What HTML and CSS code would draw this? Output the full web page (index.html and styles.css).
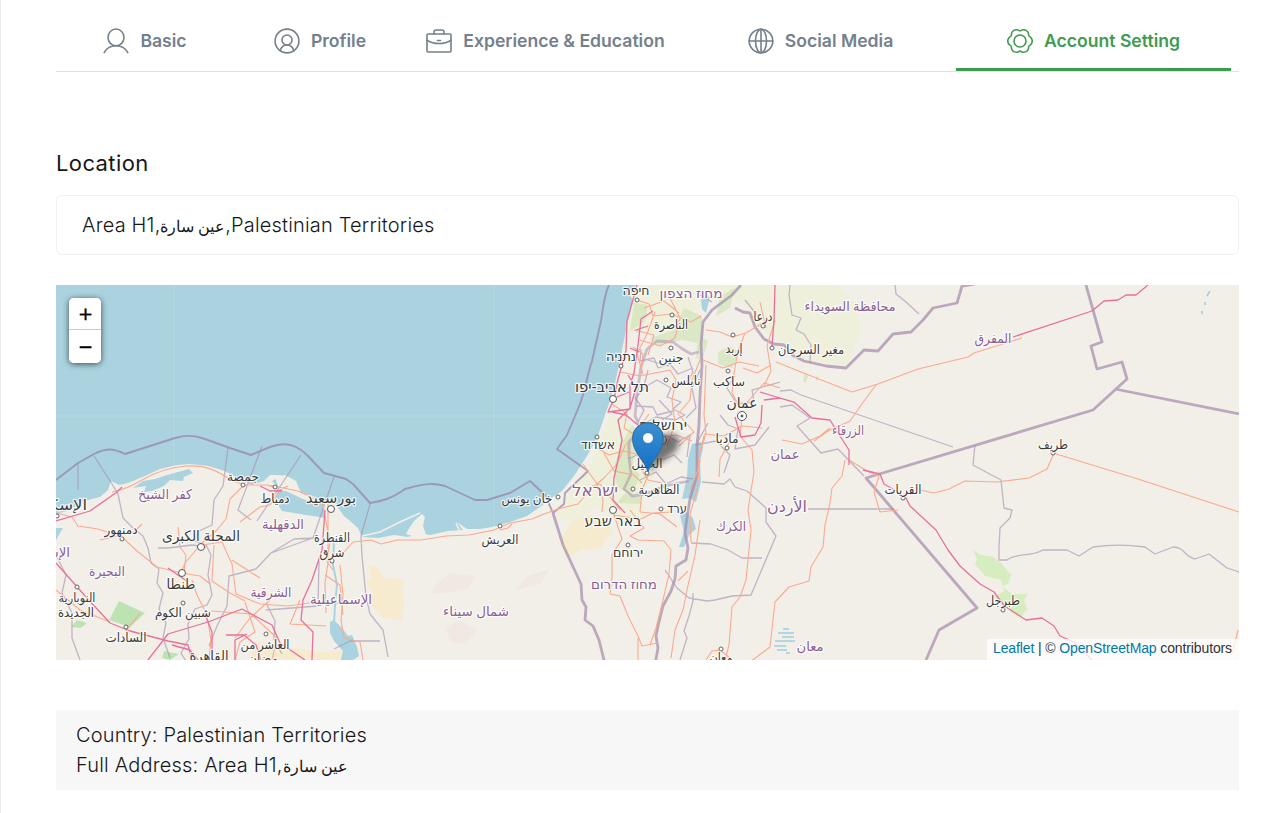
FILE: index.html
```html
<!DOCTYPE html>
<html lang="en">
<head>
<meta charset="utf-8">
<title>Account Setting</title>
<link rel="stylesheet" href="styles.css">
</head>
<body>
<main class="page">
  <nav class="tabs">
    <a class="tab">
      <svg class="tab-icon" viewBox="0 0 26 26"><ellipse cx="13" cy="9.400" rx="8" ry="8.400"/><path d="M1.200 24.600C3.500 20.400 8 17.800 13 17.800s9.500 2.600 11.800 6.800"/></svg>
      <span>Basic</span>
    </a>
    <a class="tab">
      <svg class="tab-icon" viewBox="0 0 26 26"><circle cx="13" cy="13" r="11.900"/><circle cx="13" cy="12" r="5"/><path d="M6.300 22.300c1-3.200 3.500-5.300 6.700-5.300s5.700 2.100 6.700 5.300"/></svg>
      <span>Profile</span>
    </a>
    <a class="tab">
      <svg class="tab-icon" viewBox="0 0 26 26"><rect x="1" y="6" width="24" height="18" rx="1"/><path d="M8 6V4q0-2 2-2h6q2 0 2 2v2M1 12.200c7 4.400 17 4.400 24 0M11.500 12.500h3"/></svg>
      <span>Experience &amp; Education</span>
    </a>
    <a class="tab">
      <svg class="tab-icon" viewBox="0 0 26 26"><circle cx="13" cy="13" r="11.800"/><ellipse cx="13" cy="13" rx="5.500" ry="11.800"/><path d="M1.200 13h23.600M13 1.200v23.600"/></svg>
      <span>Social Media</span>
    </a>
    <a class="tab tab-active">
      <svg class="tab-icon" viewBox="0 0 26 26"><circle cx="13" cy="13" r="6"/><path d="M14.800 2A5.200 5.200 0 0 1 21.630 5.940Q21.100 8.300 23.430 9.060A5.200 5.200 0 0 1 23.430 16.940Q21.100 17.700 21.630 20.060A5.200 5.200 0 0 1 14.800 24Q13 22.400 11.200 24A5.200 5.200 0 0 1 4.370 20.060Q4.900 17.700 2.570 16.940A5.200 5.200 0 0 1 2.570 9.060Q4.900 8.300 4.370 5.940A5.200 5.200 0 0 1 11.200 2Q13 3.600 14.800 2Z"/></svg>
      <span>Account Setting</span>
    </a>
  </nav>

  <h2 class="heading">Location</h2>
  <div class="field">Area H1,<span class="ar">عين سارة</span>,Palestinian Territories</div>

  <section class="map">
    <svg class="map-canvas" viewBox="56 285 1183 375">
      <rect class="land" x="56" y="285" width="1183" height="375"/>

      <!-- vegetation, farmland and sand -->
      <path class="farm" d="M640 285h198l18 20 6 25-14 35-45-3-22-20-26-16-8-20-25-12-30 18-18 22-42-2-8 20-6-30Z"/>
      <path class="farm" d="M610 415l20 5 3 32 22 20-12 25 3 20-20 6-30-15-20 14-22-4 18-30 20-26Z"/>
      <path class="green" d="M634 303l14 2-3 16-15 10ZM650 338l24-8 10-22 18 8 1 28-21-4-25 6ZM632 425l8 8-8 34 8 8-8 20-15-8-3-20 8-24ZM718 352l12-6 10 6-8 16-14-4ZM698 335l10 6-6 20-6-3ZM720 296l15-8-5 20-14 8ZM624 494l16 2 2 8-25-1ZM805 372l3 4-2 7-3-2ZM816 376l3 2-3 4Z"/>
      <path class="forest" d="M973 550l8 5 12 2 8 6 10 12-3 9-6 2 10 8h16l-4 6 3 9-6 8-8-3-14-14-8-3 13-5-3-12-16-4-10-12 2-5Z"/>
      <path class="wood" d="M119 601l26 12-15 14-21-7ZM77 620l10 3-6 5-10-1ZM164 651l15 3-9 6-8-2Z"/>
      <path class="sand" d="M561 538l10-16 20-8 17 10 5 10-8 6-3 8-21 2-15 8ZM368 564l10 4 6 10 20 2-2 12 2 8-2 21-18-3-10-10 -6-8 4-5-5-12 4-6ZM255 641l20 4 46 7 30-2-2 10H250Z"/>
      <path class="hill" d="M435 585l15-12 25 3-6 12-18 4-20 2ZM515 590l14-15 20-5-8 14ZM446 628l12-8 20 10-13 14-15-2Z"/>

      <!-- sea, lagoons, Dead Sea and Galilee -->
      <path class="water" d="M56 285H636L631 296 633 302 628 320 624 340 619 365 613 392 605 415 597 438 587 456 574 476 562 491 550 499 540 507 527 516 507 523 492 527 480 529 467 529 457 522 463 530 448 531 430 535 419 533 408 537 394 535 378 538 362 537 358 528 344 516 336 505 330 500 323 506 326 518 300 514 282 511 275 500 278 490 292 492 286 486 278 487 272 481 282 475 270 475 264 481 252 485 240 480 225 471 208 466 190 464 177 465 160 469 145 476 128 483 119 485 111 481 108 490 100 497 84 501 71 510 60 513 56 517Z"/>
      <path class="landfill" d="M275 477l10-2 11 6 5 12 12 3 8 6-16-2-17-8-10-6Z"/>
      <path class="spit" d="M362 536l18-4 20-10 20-9M456 523l4 9M348 520l8 8"/>
      <path class="landfill" d="M408 530l6-9 8-7 3 3-2 9 3 9-14 1-6-2Z"/>
      <path class="water" d="M133 488l10-7 12-2 12-4 22-6 4 4-9 4-1 4-13-1-6 6-12 5-8 1 2-6ZM56 528l7 0-3 5-4 7ZM330 622l4-2 8 8 6 8 4-1 5 12 2 9-6 4h-12l2-9-9-10-4-8ZM701 300l3-6 6 3-4 16-4-4Z"/>
      <path class="water" d="M692 444l9-2 2 6-3 14 1 20-5 20-7-4-7 1 5-22 1-18ZM680 515l6-3 7 6 3 11-7 6-5 12h-5l5-15Z"/>
      <path class="stripe" d="M783 629h6M778 633h16M782 637h12M775 641h20M774 646h12M777 650h10M786 653h4"/>
      <path class="canal" d="M334 540l-1 25 4 20-2 20-1 20"/>
      <path class="stripe" d="M1210 291l-3 5M1205 302l0 3M1202 311v3"/>

      <!-- tile seams -->
      <path class="seam" d="M174 285v375M494 285v375M814 285v375M1134 285v375M56 416h1183"/>

      <!-- administrative boundaries -->
      <path class="admin" d="M78 463v27M94 456l18 28 6 10 5 24 10 10 10 8 5 12 3 15 8 6-2 14 6 10-4 16 7 14-3 15 7 20M228 448l-5 38-9 14-2 25-13 6-5 10 12 4 5 10-3 20 4 20-5 10-12 4-7 15 1 15-8 14 6 10M158 548h10l24-3 14 2M262 446l-24 64 13 10M301 455l-24 36-20 30M334 477l-9 26-12 35-42 15-15 16-27 7-2 30-10 20-8 20M271 553l23-14 20-1M266 603l9 18-1 18 8 15M370 504l-9 32 1 20 4 40 4 18 13 16 5 27M266 610l52-4 1-45M380 641h-30l-16 8M56 555l10 20-4 18 10 20 0 25 8 22"/>
      <path class="admin" d="M790 285l-1 10 3 20 9 3-5 12 8 4 5 8 2 3-1 18M895 285l1 9 10 8 13 12M780 391l11-1 10 5 152 52M780 407l12-2 10 7 8 6-13 8 24 27 17-4 26 27M735 376l-8 12 10 16 17-2-2-12 28-8M720 415l8 10 10 4-3 20 20-4 14-18M708 423l-12 22 20-4 14 14-6 18M702 482l22 2 6-5 5 8 12 4 19 17v14l10 14-25 59-19 1-17 4-8 1-18-3-12-10-12-18M691 543l20 1 17 6 14 8 20 0M808 509h86M975 445l-2 20 28 15 3 28 8 2-2 8-10 10-1 20v12h8c8-7 24-3 36-10l24 0 12 6 14-9c20-3 38-2 52 0l10 7 18-7c12 0 11 10 22 12l14-5 18 14 12 4 8-1 9-13M693 593l0 8-4 15-5 15 3 7-7 22"/>
      <path class="admin" d="M641 349l-1 12 14-3 4 10 12-4 8 10 15-6M645 387l12-7 14 8-4 9 14 5-8 7 12 6-10 5-19-3-14 8M648 370l-5 20-8 8 9 12-6 12M659 400l13 14-10 6M628 459l20-9 14 10 12-5 8 8M640 480l16-8 10 12 15-7 12 2M648 360l20 6 8-8M637 406l16 1 4 8 16-4M688 357l5 15-6 10M660 432l18 10 12-7-3 22M700 295l12 7M745 300l12 15M700 370l-8 18 4 20-10 10"/>
      <path class="border thin" d="M56 480l22-17 16-9c12-6 19-6 31 0l50-16c10-3 20-3 30 1l25 9 21 7 19-8c16-6 27-2 38 9l16 17 22 6 7 5 17 19c12-2 21-4 35-14 20-6 30-6 40-3l30 14h12l23-7 20-12 15 14 8 18M609 285c-5 10-6 24-8 36l-9 40c-5 14-6 29-14 48l-11 26-10 14 31 22-23 22-1 11-11 9"/>
      <path class="border" d="M553 513l10 32 18 39 1 16 4 7-1 13 8 6 6 14 5 20"/>
      <path class="border" d="M741 285l-9 10-20 15-9 12-2 23 1 20-2 30-1 30-2 20 0 30-7 24-3 18-2 16 3 15-2 12-10 6-1 13-4 12-8 15-5 20-2 10 2 12-4 22"/>
      <path class="border" d="M735 308l8 4 7 1 5 14 9 12 10 5 10 1 8 10 12 6 22 5 20 2 18-18 14 1 15-17 18-2 12-12 10-12 24-5 5-17 12-2 10-2"/>
      <path class="border" d="M1086 285l16 57-11 4 6 23 25-7 5 17-11 10-23 21-227 68 111 130-38 22-13 30M1115 389l124 25"/>
      <path class="border green-line" d="M647 349l10-8 16 1 8 6 10 6 8-2M647 349l-6 18-4 27-2 22 6 12-12 14 0 14 2 18-7 15 8 7 13-2 20-8 24-5"/>

      <!-- primary roads -->
      <path class="road" d="M56 513l16 4 6 9 20 3 24 8 15 14 20 16 25 6 18 3 10 8M112 492c12-2 20-6 30-12s24-12 44-14c20-1 30 4 45 14l13 5 24 0 14 6M244 485l-14 14-4 20-10 12-14 12-17 20-4 10M178 527l2 20 6 8-2 18M202 545l20-3 10 22 4 30 24 10 28 2 28-4 38 2M192 580l5 15 10 20 4 25-2 20M214 545l-2 36 18 12 15 8M232 560l20 13 8 5M240 522l20-15 10-2 10-15 8-4M268 485l30 6 13 6 12 8 3 17 4 20-3 20 6 8M270 600l-20 18-15 20M211 611l40 3 26 24-5 22M56 590l24 20 30 12M245 602l10 30-15 10-5 18M328 500v63l-3 20 1 30M340 565l3 30-2 25 3 18 16 4 3 18M300 600l-10 24 36 2M140 613l-14 18M100 540l34-8 8-8"/>
      <path class="road" d="M330 560l14-8 9-10 18-2 10 4 16-4 24 0 25-4 23-1 25-5 16-7 22-4 12-5 14-5 20-5 12-14 14-12 13-14 8-18 14-18 10-14M500 530l8-2 4-4M325 575l15 10 3 30"/>
      <path class="road" d="M637 300l12 4 4 12 18-2 20 8 10-6M640 340l20 6 15-8 5-20-10-20M644 308l20-7 15 12M655 312l-8 22-10 20 6 20M634 330l20 5-6 20M633 347l10 7-2 20M620 372l20 4 30-6 6 10-4 20 3 24-8 22M700 360l-8 20-2 20-12 14 16 18-15 14M612 404l15 10-3 14 16 10 14 0 22-3 16 6M595 447l14 8 14-4 22 5M583 464l14 20 6 16-1 12M604 453l10 18 20 4 8 8M648 475l-6 15-2 22M648 450l-8 18 8 12 14 3"/>
      <path class="road" d="M706 330l14 2 12 5 14-4 20-12M703 360l20 8 16-6 20 4M745 333l-7 18-4 22-2 20 8 14M706 365l-2 50 2 18-6 20M760 302l6 26M775 320l-8 26 4 25-7 15M742 416l-2 20 12 14 2 22-6 38 3 20-5 50-6 17-8 10-3 38-5 20M742 408l22-25 16 5M704 434l20 2 18-10 20 2M704 436l-5 20-1 14-8 20M730 441l-10 18-1 18M771 365l-14 8-14-5M700 460l-3 30-7 24 1 28"/>
      <path class="road" d="M776 362l30 12 46 18 26-8 40-15 50-12 6-4 48-15M876 385l-12 16-14 20-22 10-14 10M782 440l20 4 18-8 10-8M845 460l-3 16-10 12-2 15-5 22-2 22-12 20-2 14-20 6-14 15-5 45-20 15-45 3M849 460l20 12 10 4-5 16 6 20 18-2M920 490l14 3 15-4 16-8 32 1 32-4 18-9 7-16M1053 453l85 26 101 33M1238 630l-6 25"/>
      <path class="road" d="M614 515l8 24-10 16 0 22-2 17 10 2 8 20 10 20 4 10 16-3M613 515l28 4 12-6 18-1M630 510l14 18-14 8 8 4 26 1 7 9-2 24-7 30-6 24-6 17M700 520l-5 35-8 35-4 20-8 20-4 28M620 510l-20-26-8 2M706 660l6-9 8-1 10 8M640 512l20 2 17 13M688 571l-10 10M638 638v22"/>
      <!-- motorways -->
      <path class="motorway" d="M56 521l34-10 27-19 5-5M56 563l30 34 24 26 20 8 38 10 20 4 4 15M148 660l20-26 40-12 34-13 30 16 8 18 25 17M260 486l10 5 12 0M325 510l-3 40-10 30-9 20-2 20 12 12-1 28M204 612l8 20 0 28M168 568l20 14M172 645l18 5 8 10M226 635l18 0 12 10 5 15M235 660l0-20 12-6"/>
      <path class="motorway" d="M637 285l-10 36-1 30-8 28-4 20-6 13 22-3 0-24 4-12 4-28 3-26 12-8M628 375l8 13-6 20-12 12 4 20-4 20-4 18-1 22 12 13M612 412l14 3 12 10M617 397l12-5M630 348l9 4M636 330l12-4"/>
      <path class="motorway" d="M775 285l-1 36-2 25M762 405l-1 18-6 12-14 2-6-20M764 400l16-2 14 4 18 16 18 2 10 16 9 14 0 15M780 398l-20-6M863 470l17 4 4 10 14 8 8 6 4 8 26 24 12 20 12 16 20 18 14 8 12 16M1006 607l20 13 16-2 12 8 6 10 14 6 18 18M1013 337l79-26 12-10 14-1 8-5 10 0 12-10"/>

      <!-- cities -->
      <g class="city">
        <circle cx="201" cy="547" r="3.500"/><circle cx="182" cy="573" r="3.500"/><circle cx="331" cy="509" r="3.500"/><circle cx="613" cy="399" r="3.500"/><circle cx="613" cy="510" r="3.500"/><circle cx="662" cy="440" r="4.500"/><circle cx="742" cy="416" r="4.500"/><circle class="dot" cx="742" cy="416" r="1"/>
      </g>
      <g class="town">
        <circle cx="243" cy="485" r="2"/><circle cx="275" cy="487" r="2"/><circle cx="122" cy="539" r="2"/><circle cx="77" cy="587" r="2"/><circle cx="183" cy="603" r="2"/><circle cx="126" cy="627" r="2"/><circle cx="266" cy="634" r="2"/><circle cx="332" cy="561" r="2"/><circle cx="500" cy="526" r="2"/><circle cx="558" cy="497" r="2"/><circle cx="637" cy="300" r="2"/><circle cx="672" cy="315" r="2"/><circle cx="671" cy="348" r="2"/><circle cx="666" cy="380" r="2"/><circle cx="621" cy="366" r="2"/><circle cx="597" cy="437" r="2"/><circle cx="733" cy="335" r="2"/><circle cx="763" cy="326" r="2"/><circle cx="772" cy="348" r="2"/><circle cx="728" cy="371" r="2"/><circle cx="727" cy="448" r="2"/><circle cx="633" cy="489" r="2"/><circle cx="661" cy="509" r="2"/><circle cx="628" cy="545" r="2"/><circle cx="721" cy="649" r="2"/><circle cx="647" cy="473" r="2"/><circle cx="1053" cy="453" r="2"/><circle cx="903" cy="498" r="2"/><circle cx="1003" cy="610" r="2"/><circle cx="57" cy="516" r="2"/>
      </g>

      <!-- place labels -->
      <g class="label">
        <text x="636" y="295" textLength="27" lengthAdjust="spacingAndGlyphs">חיפה</text>
        <text x="671" y="329" textLength="34" lengthAdjust="spacingAndGlyphs">الناصرة</text>
        <text x="763" y="321" textLength="19" lengthAdjust="spacingAndGlyphs">درعا</text>
        <text x="734" y="353" textLength="17" lengthAdjust="spacingAndGlyphs">إربد</text>
        <text x="671" y="362" textLength="25" lengthAdjust="spacingAndGlyphs">جنين</text>
        <text x="621" y="361" textLength="30" lengthAdjust="spacingAndGlyphs">נתניה</text>
        <text x="686" y="385" textLength="29" lengthAdjust="spacingAndGlyphs">نابلس</text>
        <text x="729" y="386" textLength="32" lengthAdjust="spacingAndGlyphs">ساكب</text>
        <text x="727" y="443" textLength="23" lengthAdjust="spacingAndGlyphs">مادبا</text>
        <text x="598" y="449" textLength="34" lengthAdjust="spacingAndGlyphs">אשדוד</text>
        <text x="647" y="468" textLength="31" lengthAdjust="spacingAndGlyphs">الخليل</text>
        <text x="659" y="494" textLength="41" lengthAdjust="spacingAndGlyphs">الظاهرية</text>
        <text x="677" y="513" textLength="20" lengthAdjust="spacingAndGlyphs">ערד</text>
        <text x="628" y="557" textLength="30" lengthAdjust="spacingAndGlyphs">ירוחם</text>
        <text x="721" y="662" textLength="23" lengthAdjust="spacingAndGlyphs">معان</text>
        <text x="811" y="354" textLength="66" lengthAdjust="spacingAndGlyphs">مغير السرحان</text>
        <text x="1053" y="449" textLength="30" lengthAdjust="spacingAndGlyphs">طريف</text>
        <text x="903" y="494" textLength="37" lengthAdjust="spacingAndGlyphs">القريات</text>
        <text x="1003" y="605" textLength="34" lengthAdjust="spacingAndGlyphs">طبرجل</text>
        <text x="243" y="481" textLength="32" lengthAdjust="spacingAndGlyphs">جمصة</text>
        <text x="275" y="503" textLength="29" lengthAdjust="spacingAndGlyphs">دمياط</text>
        <text x="121" y="534" textLength="33" lengthAdjust="spacingAndGlyphs">دمنهور</text>
        <text x="332" y="542" textLength="36" lengthAdjust="spacingAndGlyphs">القنطرة</text>
        <text x="332" y="557" textLength="25" lengthAdjust="spacingAndGlyphs">شرق</text>
        <text x="77" y="602" textLength="37" lengthAdjust="spacingAndGlyphs">النوبارية</text>
        <text x="76" y="617" textLength="36" lengthAdjust="spacingAndGlyphs">الجديدة</text>
        <text x="183" y="617" textLength="56" lengthAdjust="spacingAndGlyphs">شبين الكوم</text>
        <text x="126" y="642" textLength="41" lengthAdjust="spacingAndGlyphs">السادات</text>
        <text x="265" y="649" textLength="49" lengthAdjust="spacingAndGlyphs">العاشر من</text>
        <text x="266" y="663" textLength="36" lengthAdjust="spacingAndGlyphs">رمضان</text>
        <text x="527" y="503" textLength="51" lengthAdjust="spacingAndGlyphs">خان يونس</text>
        <text x="500" y="544" textLength="37" lengthAdjust="spacingAndGlyphs">العريش</text>
      </g>
      <g class="label large">
        <text x="612" y="392" textLength="74" lengthAdjust="spacingAndGlyphs">תל אביב-יפו</text>
        <text x="742" y="408" textLength="31" lengthAdjust="spacingAndGlyphs">عمان</text>
        <text x="663" y="430" textLength="48" lengthAdjust="spacingAndGlyphs">ירושלים</text>
        <text x="613" y="526" textLength="57" lengthAdjust="spacingAndGlyphs">באר שבע</text>
        <text x="331" y="503" textLength="50" lengthAdjust="spacingAndGlyphs">بورسعيد</text>
        <text x="201" y="541" textLength="78" lengthAdjust="spacingAndGlyphs">المحلة الكبرى</text>
        <text x="181" y="589" textLength="29" lengthAdjust="spacingAndGlyphs">طنطا</text>
        <text x="209" y="661" textLength="39" lengthAdjust="spacingAndGlyphs">القاهرة</text>
        <text x="51" y="510" textLength="72" lengthAdjust="spacingAndGlyphs">الإسكندرية</text>
      </g>
      <g class="label region">
        <text x="691" y="298" textLength="63" lengthAdjust="spacingAndGlyphs">מחוז הצפון</text>
        <text x="785" y="459" textLength="29" lengthAdjust="spacingAndGlyphs">عمان</text>
        <text x="624" y="589" textLength="66" lengthAdjust="spacingAndGlyphs">מחוז הדרום</text>
        <text x="731" y="531" textLength="30" lengthAdjust="spacingAndGlyphs">الكرك</text>
        <text x="810" y="651" textLength="27" lengthAdjust="spacingAndGlyphs">معان</text>
        <text x="850" y="311" textLength="91" lengthAdjust="spacingAndGlyphs">محافظة السويداء</text>
        <text x="993" y="343" textLength="37" lengthAdjust="spacingAndGlyphs">المفرق</text>
        <text x="848" y="435" textLength="32" lengthAdjust="spacingAndGlyphs">الزرقاء</text>
        <text x="165" y="499" textLength="54" lengthAdjust="spacingAndGlyphs">كفر الشيخ</text>
        <text x="283" y="529" textLength="42" lengthAdjust="spacingAndGlyphs">الدقهلية</text>
        <text x="41" y="557" textLength="58" lengthAdjust="spacingAndGlyphs">الإسكندرية</text>
        <text x="107" y="576" textLength="36" lengthAdjust="spacingAndGlyphs">البحيرة</text>
        <text x="271" y="597" textLength="41" lengthAdjust="spacingAndGlyphs">الشرقية</text>
        <text x="341" y="604" textLength="62" lengthAdjust="spacingAndGlyphs">الإسماعيلية</text>
        <text x="476" y="616" textLength="66" lengthAdjust="spacingAndGlyphs">شمال سيناء</text>
      </g>
      <g class="label region country">
        <text x="595" y="496" textLength="46" lengthAdjust="spacingAndGlyphs">ישראל</text>
        <text x="787" y="512" textLength="40" lengthAdjust="spacingAndGlyphs">الأردن</text>
      </g>

      <!-- marker -->
      <defs>
        <linearGradient id="pin" x1="0" y1="0" x2="0" y2="1"><stop offset="0" stop-color="#3b90d0"/><stop offset="1" stop-color="#126fc6"/></linearGradient>
        <filter id="soft" x="-50%" y="-50%" width="200%" height="200%"><feGaussianBlur stdDeviation="3"/></filter>
      </defs>
      <path class="pin-shadow" filter="url(#soft)" d="M648 472l6-22c2-12 10-17 18-16s9 9 3 18Z"/>
      <path class="pin" d="M648 471.500C645 461 632.500 453 632.500 438a15.400 15.400 0 0 1 30.800 0C663.300 453 651 461 648 471.500Z"/>
      <circle class="pin-eye" cx="648" cy="438" r="5.500"/>
    </svg>
    <div class="zoom-control"><button class="zoom-btn">+</button><button class="zoom-btn">−</button></div>
    <div class="attribution"><a>Leaflet</a> | © <a>OpenStreetMap</a> contributors</div>
  </section>

  <section class="summary">
    <div>Country: Palestinian Territories</div>
    <div>Full Address: Area H1,<span class="ar">عين سارة</span></div>
  </section>
</main>
</body>
</html>
```
FILE: styles.css
```css
* { box-sizing: border-box; }
body {
  margin: 0;
  background: #fff;
  color: #171717;
  font-family: Inter, "Noto Sans", sans-serif;
}
.page {
  height: 813px;
  padding: 0 39px 0 55px;
  border-left: 1px solid #ececec;
  overflow: hidden;
}
.tabs {
  display: grid;
  grid-template-columns: 178px 172px 279px 271px 275px;
  height: 72px;
  border-bottom: 1px solid #e1e1e1;
}
.tab {
  display: flex;
  align-items: center;
  justify-content: center;
  gap: 11px;
  height: 71px;
  padding-top: 13px;
  border-bottom: 3px solid transparent;
  color: #74808c;
  font-size: 17.6px;
  font-weight: 600;
  white-space: nowrap;
}
.tab-active { color: #409b50; border-bottom-color: #409b50; }
.tab-icon {
  flex: none;
  width: 26px;
  height: 26px;
  fill: none;
  stroke: currentColor;
  stroke-width: 1.6;
  stroke-linecap: round;
  stroke-linejoin: round;
}
.heading {
  margin: 75px 0 0;
  font-size: 22px;
  line-height: 32px;
  font-weight: 400;
  letter-spacing: .4px;
}
.field {
  height: 60px;
  margin-top: 16px;
  padding: 0 25px;
  border: 1px solid #f1f1f1;
  border-radius: 6px;
  font-size: 20px;
  font-weight: 300;
  letter-spacing: .18px;
  line-height: 58px;
  white-space: nowrap;
}
.ar {
  font-family: "Liberation Serif", "DejaVu Sans", serif;
  font-size: 15.5px;
  line-height: 1;
  letter-spacing: 0;
}
.map {
  position: relative;
  height: 375px;
  margin-top: 30px;
  overflow: hidden;
}
.map-canvas { display: block; width: 1183px; height: 375px; }
.map-canvas path { fill: none; stroke-linejoin: round; }
.map-canvas .land { fill: #f2efe9; }
.map-canvas .water { fill: #aad3df; }
.map-canvas .landfill { fill: #f2efe9; }
.map-canvas .farm { fill: #eef0d5; opacity: .75; }
.map-canvas .green { fill: #cbe3b0; opacity: .6; }
.map-canvas .forest { fill: #d6edbf; }
.map-canvas .wood { fill: #bde3b3; }
.map-canvas .sand { fill: #f6ebcf; }
.map-canvas .hill { fill: #f0e8e1; }
.map-canvas .spit { stroke: #f2efe9; stroke-width: 1.5; }
.map-canvas .stripe { stroke: #9fcfdf; stroke-width: 1.5; }
.map-canvas .canal { stroke: #aad3df; stroke-width: 2; }
.map-canvas .seam { stroke: #fff; stroke-opacity: .15; }
.map-canvas .admin { stroke: #a58eb0; stroke-opacity: .62; stroke-width: 1.3; }
.map-canvas .border { stroke: #a58cab; stroke-opacity: .72; stroke-width: 2.8; }
.map-canvas .thin { stroke: #9782a8; stroke-width: 1.9; }
.map-canvas .green-line { stroke-opacity: .5; }
.map-canvas .road { stroke: #fba98f; stroke-width: 1.1; }
.map-canvas .motorway { stroke: #e8709a; stroke-width: 1.3; }
.city circle { fill: #fff; stroke: #555; stroke-width: 1; }
.city .dot { fill: #444; }
.town circle { fill: #fff; stroke: #555; stroke-width: .9; }
.label {
  fill: #3b3b3b;
  stroke: #fff;
  stroke-opacity: .75;
  stroke-width: 2.5px;
  stroke-linejoin: round;
  paint-order: stroke;
  font-family: "Noto Sans", "DejaVu Sans", sans-serif;
  font-size: 12.5px;
  text-anchor: middle;
}
.large { font-size: 14.5px; }
.region { fill: #8b5f91; font-size: 13.5px; }
.country { font-size: 16px; }
.map-canvas .pin { fill: url(#pin); stroke: #2e6c9b; stroke-width: 1; }
.map-canvas .pin-shadow { fill: #333; opacity: .65; }
.pin-eye { fill: #fff; stroke: #2f78b5; }
.zoom-control {
  position: absolute;
  top: 13px;
  left: 13px;
  width: 32px;
  border-radius: 5px;
  background: #fff;
  box-shadow: 0 1px 6px rgba(0, 0, 0, .65);
  overflow: hidden;
}
.zoom-btn {
  display: block;
  width: 32px;
  height: 33px;
  padding: 0 0 0 1px;
  border: 0;
  background: #fff;
  color: #000;
  font: 18px/32px "DejaVu Sans", sans-serif;
  -webkit-text-stroke: .4px #000;
}
.zoom-btn:first-child { height: 32px; border-bottom: 1px solid #ccc; }
.attribution {
  position: absolute;
  right: 0;
  bottom: 0;
  height: 21px;
  padding: 0 7px 0 6px;
  background: rgba(255, 255, 255, .75);
  color: #333;
  font: 14px/19px "Liberation Sans", Arial, sans-serif;
  letter-spacing: -.12px;
}
.attribution a { color: #0078a8; }
.summary {
  height: 80px;
  margin-top: 50px;
  padding: 10px 20px;
  background: #f7f7f7;
  font-size: 20px;
  font-weight: 300;
  letter-spacing: .18px;
  line-height: 30px;
  white-space: nowrap;
}
```
